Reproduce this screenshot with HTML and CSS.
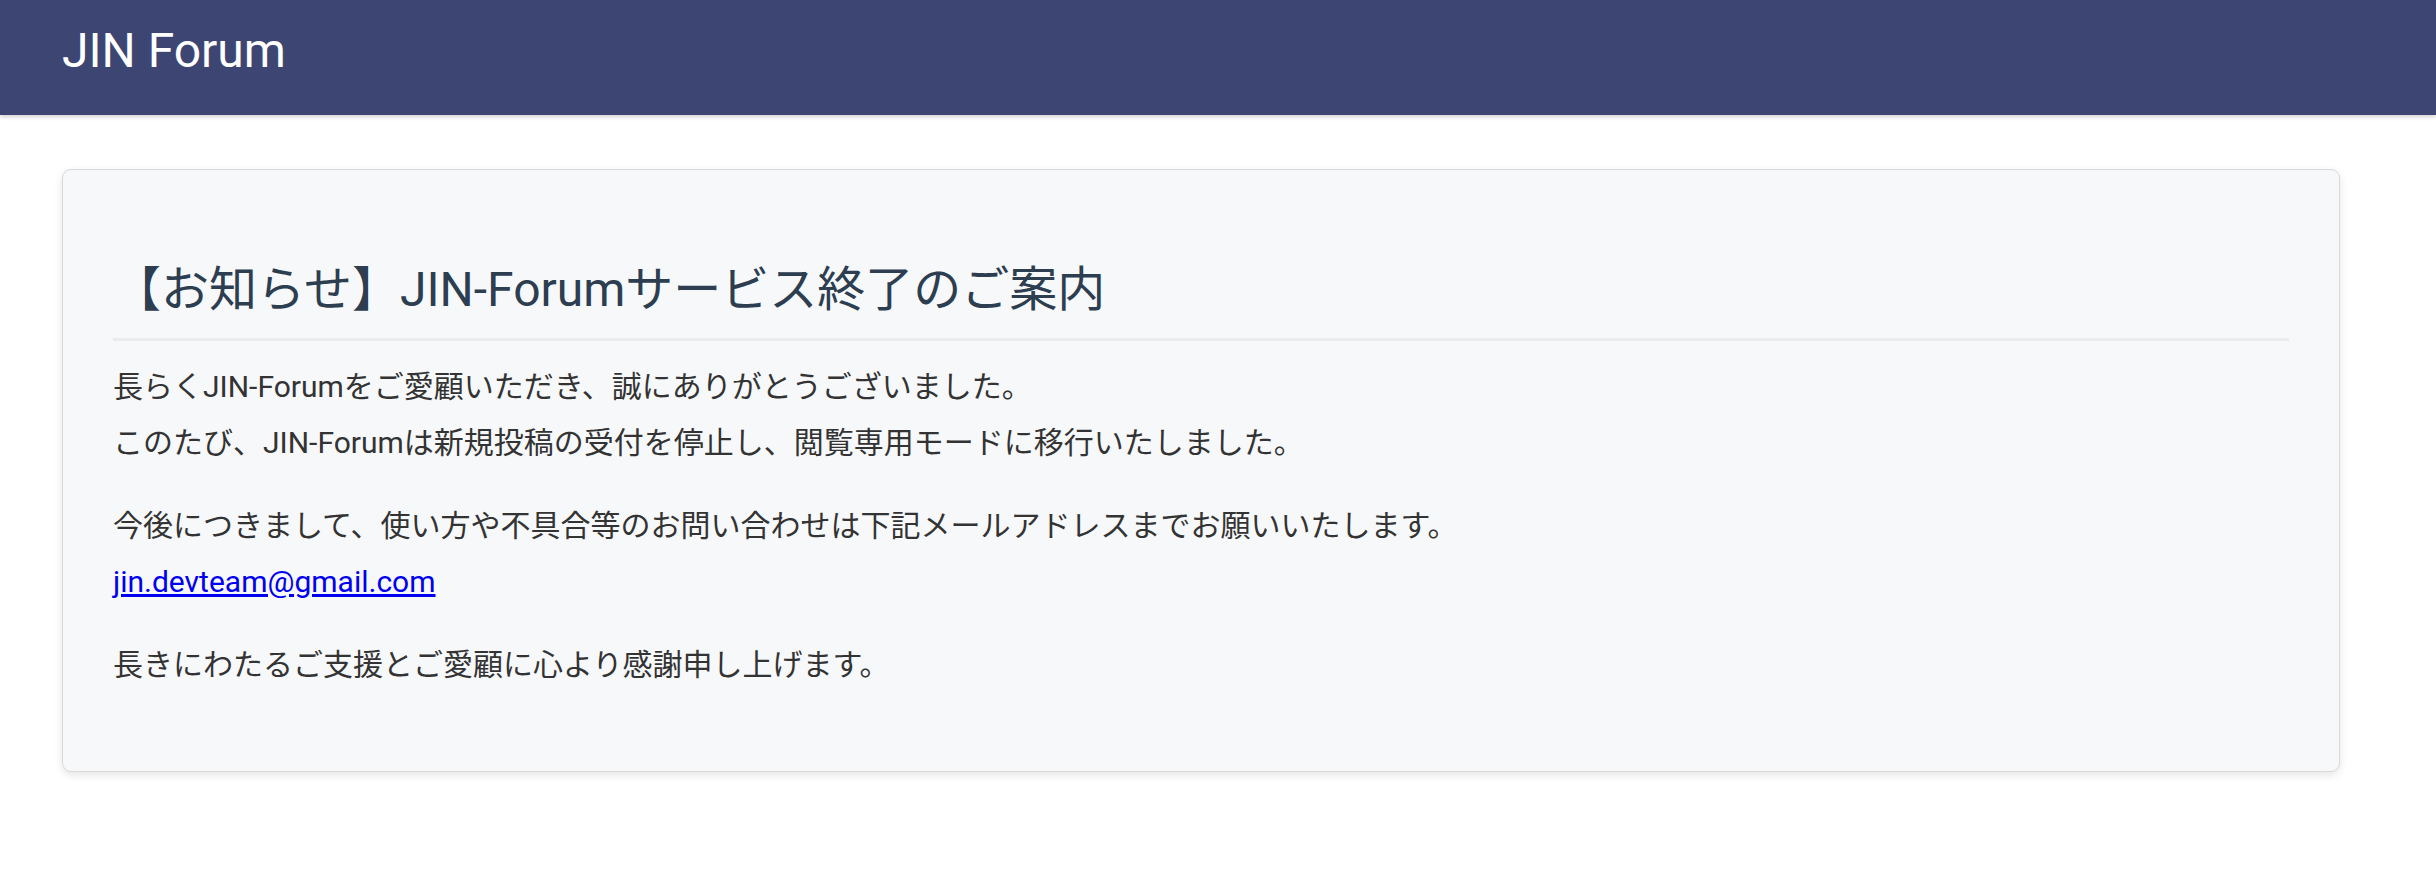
FILE: index.html
```html
<!DOCTYPE html>
<html lang="ja">
<head>
<meta charset="utf-8">
<title>JIN Forum</title>
<link rel="stylesheet" href="styles.css">
</head>
<body>
<header class="site-header">
  <div class="brand">JIN Forum</div>
</header>
<main class="main">
  <section class="notice-card">
    <h1 class="notice-title">【お知らせ】JIN-Forumサービス終了のご案内</h1>
    <p class="notice-text">長らくJIN-Forumをご愛顧いただき、誠にありがとうございました。<br>このたび、JIN-Forumは新規投稿の受付を停止し、閲覧専用モードに移行いたしました。</p>
    <p class="notice-text">今後につきまして、使い方や不具合等のお問い合わせは下記メールアドレスまでお願いいたします。<br><a class="notice-link" href="mailto:jin.devteam@gmail.com">jin.devteam@gmail.com</a></p>
    <p class="notice-text">長きにわたるご支援とご愛顧に心より感謝申し上げます。</p>
  </section>
</main>
</body>
</html>
```

FILE: styles.css
```css
* {
  box-sizing: border-box;
}

html, body {
  margin: 0;
  padding: 0;
  background: #ffffff;
  font-family: Roboto, "Noto Sans CJK JP", sans-serif;
}

.site-header {
  height: 115px;
  padding: 22px 62px 0;
  background: #3d4673;
  box-shadow: 0 2px 4px rgba(0, 0, 0, 0.18);
}

.brand {
  color: #ffffff;
  font-size: 48px;
  line-height: normal;
  font-weight: 400;
}

.main {
  padding: 54px 96px 40px 62px;
}

.notice-card {
  background: #f7f8fa;
  border: 1px solid #d9d9d9;
  border-radius: 9px;
  box-shadow: 0 3px 9px rgba(0, 0, 0, 0.1);
  padding: 50px 50px 51px;
}

.notice-title {
  margin: 41px 0 18px;
  padding-bottom: 19px;
  border-bottom: 3px solid #ebebeb;
  font-size: 48px;
  line-height: 1.2;
  font-weight: 400;
  color: #2c3e50;
}

.notice-text {
  margin: 0 0 27px;
  font-size: 30px;
  line-height: 56px;
  color: #333333;
}

.notice-link {
  color: #0000ee;
  text-decoration: underline;
}
```
